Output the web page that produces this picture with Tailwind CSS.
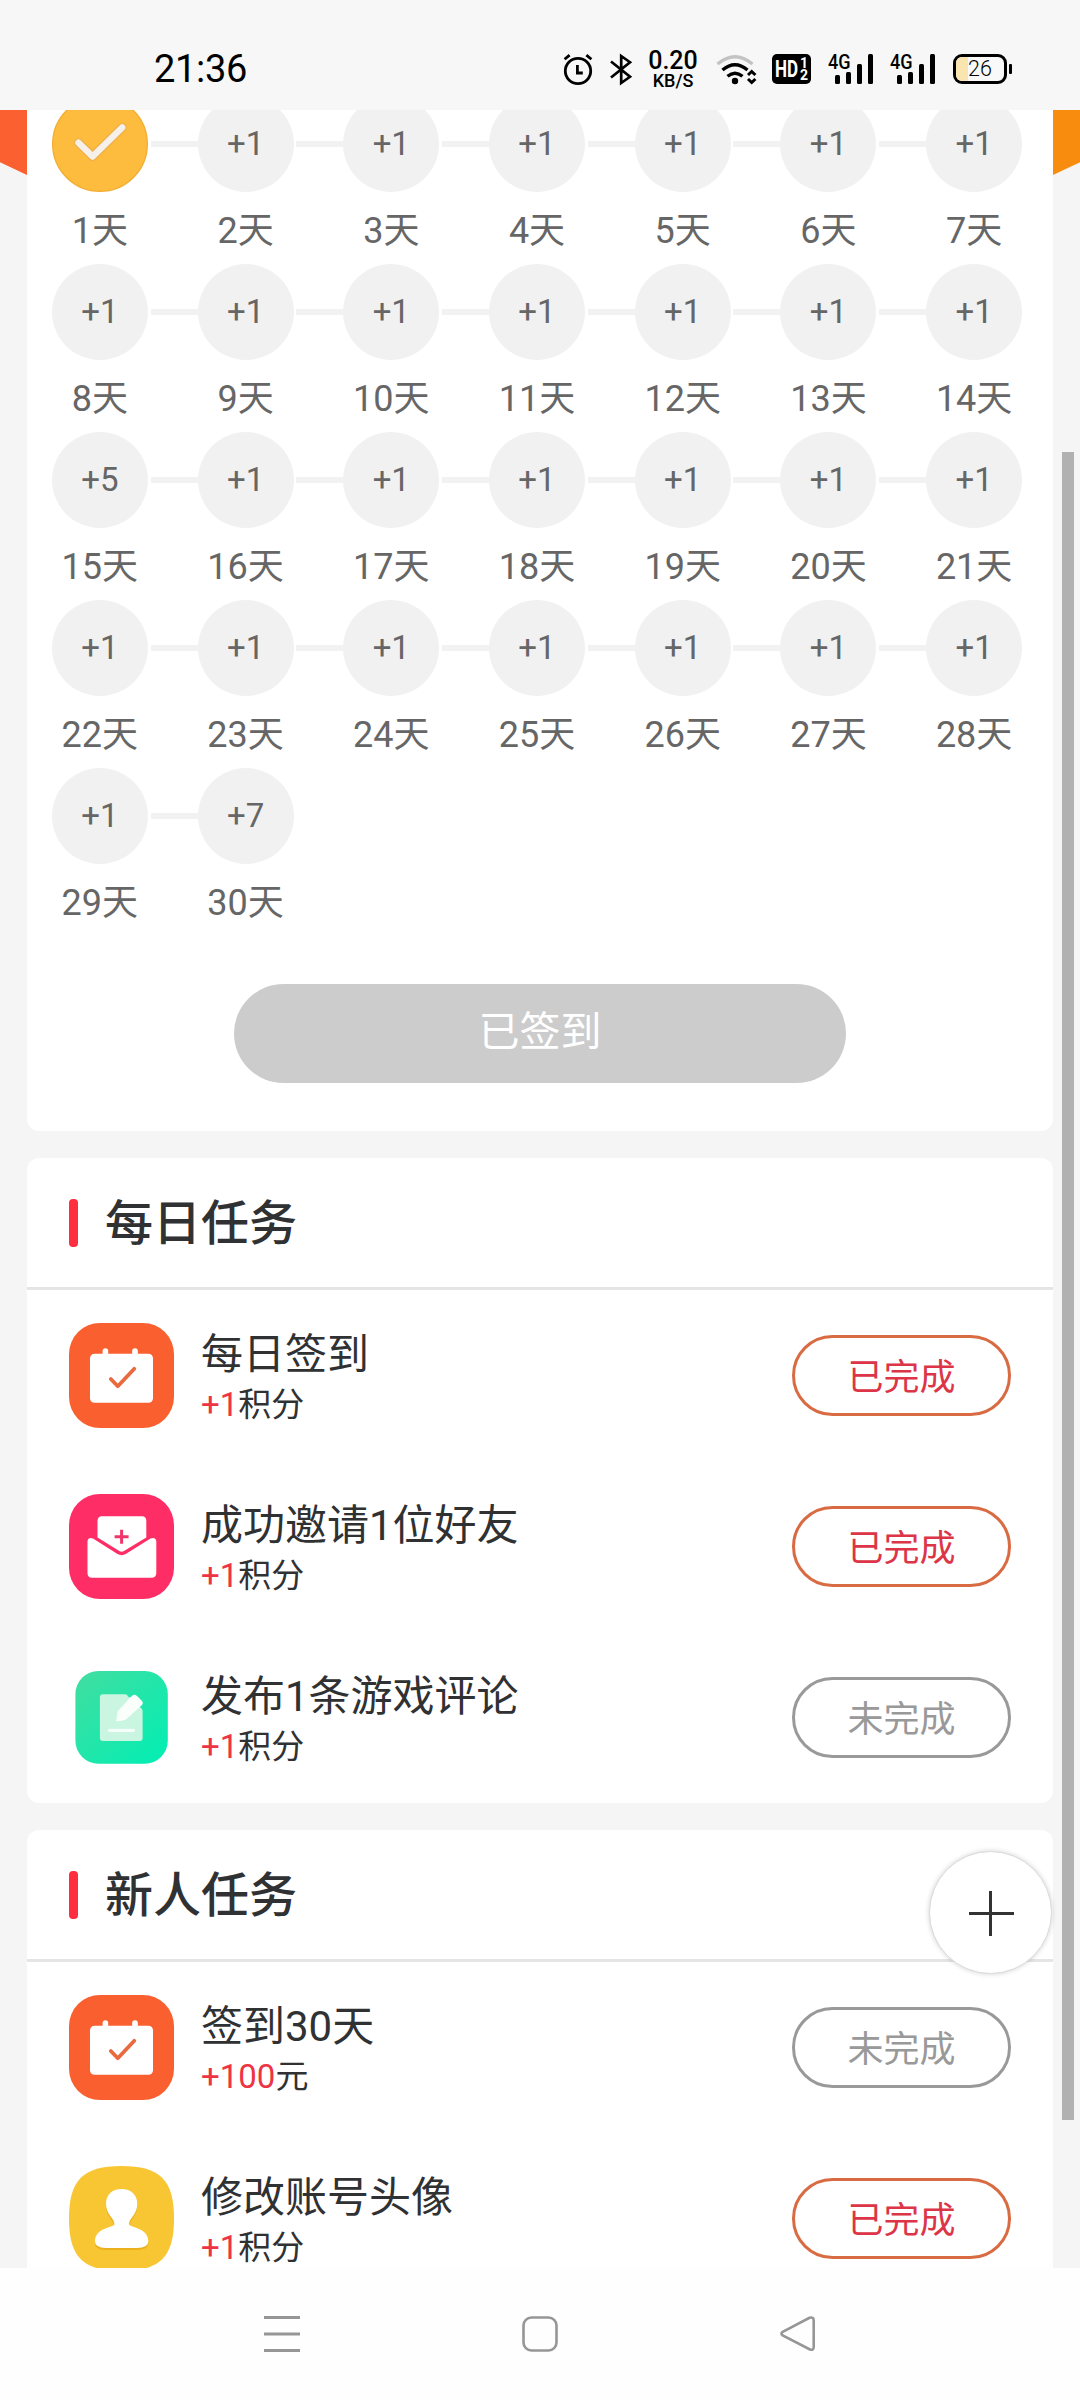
<!DOCTYPE html>
<html lang="zh-CN">
<head>
<meta charset="utf-8">
<title>签到</title>
<script src="https://cdn.jsdelivr.net/npm/@tailwindcss/browser@4"></script>
</head>
<body class="bg-[#f5f5f5]">
<div class="relative flex h-[2400px] w-[1080px] flex-col overflow-hidden bg-[#f5f5f5] font-[Roboto,'Noto_Sans_CJK_SC',sans-serif] text-[#303133]">

  <!-- status bar -->
  <header class="flex h-[110px] shrink-0 items-start bg-[#f7f7f7] pt-[50px] pl-[154px] text-black">
    <div class="w-[408px] text-[38px] leading-[39px] tracking-[-0.3px]">21:36</div>
    <svg class="mr-[14px] h-10 w-8" viewBox="0 0 32 40" fill="none" stroke="#000" stroke-width="2.8"><circle cx="16" cy="21" r="12.7"/><path d="M15.4 15v8h5.4M2.6 9.3l5-4.2M29.4 9.3l-5-4.2"/></svg>
    <svg class="mr-3 h-10 w-[26px]" viewBox="0 0 26 40" fill="none" stroke="#000" stroke-width="2.7"><path d="M3 11.5l19 15.3-8.8 6.2V6l8.8 6.2L3 27.5"/></svg>
    <div class="mr-[14px] flex w-[54px] flex-col items-center font-medium">
      <span class="text-[25px] leading-[21px]">0.20</span>
      <span class="mt-px text-[18px] leading-[18px]">KB/S</span>
    </div>
    <svg class="mr-3 h-10 w-[46px]" viewBox="0 0 46 40" fill="none" stroke-width="3.4"><path d="M3.5 14Q21 -.5 38.500 14" stroke="#c3c3c3"/><path d="M8.500 20Q21 9.500 33.500 20M13.500 26.300Q21 20 28.500 26.300" stroke="#000"/><circle cx="21" cy="31" r="3.200" fill="#000"/><path d="M34 25l3.700-3.500 3.700 3.500M34 29l3.700 3.500 3.700-3.500" stroke="#000" stroke-width="3"/></svg>
    <div class="mt-1 mr-[17px] flex h-[30px] w-[39px] rounded-[5px] bg-black pl-[3px] font-bold text-white">
      <span class="w-[24px] text-[24px] leading-[31px]"><span class="inline-block origin-left scale-x-[0.71]">HD</span></span>
      <span class="flex flex-col pt-[3px] pl-px text-[14px] leading-[12px]"><span>1</span><span>2</span></span>
    </div>
    <div class="mr-4 flex h-10 w-[46px]">
      <span class="relative w-0"><span class="absolute top-[2px] left-0 origin-left scale-x-[0.86] text-[21px] leading-[21px] font-medium">4G</span></span>
      <svg class="h-10 w-[46px]" viewBox="0 0 46 40"><rect x="7" y="25" width="5" height="9" rx="1.500"/><rect x="18" y="22" width="5" height="12" rx="1.500"/><rect x="29" y="14" width="5" height="20" rx="1.500"/><rect x="40" y="4" width="5" height="30" rx="1.500"/></svg>
    </div>
    <div class="mr-4 flex h-10 w-[46px]">
      <span class="relative w-0"><span class="absolute top-[2px] left-0 origin-left scale-x-[0.86] text-[21px] leading-[21px] font-medium">4G</span></span>
      <svg class="h-10 w-[46px]" viewBox="0 0 46 40"><rect x="7" y="25" width="5" height="9" rx="1.500"/><rect x="18" y="22" width="5" height="12" rx="1.500"/><rect x="29" y="14" width="5" height="20" rx="1.500"/><rect x="40" y="4" width="5" height="30" rx="1.500"/></svg>
    </div>
    <div class="mt-1 flex items-center pl-px">
      <div class="relative flex h-[30px] w-[54px] items-center justify-center overflow-hidden rounded-[9px] border-[3px] border-black bg-[#f9f9f9] text-[21.500px] font-light"><span class="absolute inset-y-0 left-0 w-[12px] bg-[#fae5b0]"></span><span class="relative">26</span></div>
      <div class="ml-[1.500px] h-[10px] w-[3px] rounded-[1px] bg-black"></div>
    </div>
  </header>

  <!-- scrolling page -->
  <main class="relative h-[2158px] shrink-0 overflow-hidden px-[27px]">
    <svg class="absolute top-0 left-0 h-[65px] w-[27px]" viewBox="0 0 27 65"><path d="M0 0H27V65L0 52.300Z" fill="#fa6030"/></svg>
    <svg class="absolute top-0 right-0 h-[65px] w-[27px]" viewBox="0 0 27 65"><path d="M27 0H0V65L27 52.300Z" fill="#f78c0f"/></svg>

    <section class="relative -mt-[14px] h-[1035px] rounded-[12px] bg-white">
      <div id="days" class="grid w-[1020px] grid-cols-7"></div>
      <div class="mt-12 ml-[207px] flex h-[99px] w-[612px] items-center justify-center rounded-full bg-[#ccc] text-[41px] text-white"><span class="-mt-px">已签到</span></div>
    </section>

    <section class="mt-[27px] rounded-[12px] bg-white">
      <h2 class="flex h-[132px] items-center border-b-[3px] border-[#e5e5e5] pl-[42px] text-[48px] font-medium"><span class="mr-[27px] h-12 w-[9px] rounded-[4px] bg-[#fe2e40]"></span><span class="pt-[3px]">每日任务</span></h2>
      <div id="daily"></div>
    </section>

    <section class="mt-[27px] rounded-[12px] bg-white">
      <h2 class="flex h-[132px] items-center border-b-[3px] border-[#e5e5e5] pl-[42px] text-[48px] font-medium"><span class="mr-[27px] h-12 w-[9px] rounded-[4px] bg-[#fe2e40]"></span><span class="pt-[3px]">新人任务</span></h2>
      <div id="newbie"></div>
    </section>
  </main>

  <!-- floating add button and scroll thumb -->
  <button class="absolute top-[1851px] left-[929px] flex h-[123px] w-[123px] items-center justify-center rounded-full border border-[#dadada] bg-white shadow-[0_0_5px_rgba(0,0,0,0.18)]">
    <svg class="h-[46px] w-[46px]" viewBox="0 0 46 46" stroke="#333" stroke-width="3"><path d="M1 23.500H46M22.500 1V46"/></svg>
  </button>
  <div class="absolute top-[452px] left-[1062px] h-[1668px] w-3 bg-[#b1b1b1]"></div>

  <!-- system navigation -->
  <nav class="flex h-[132px] shrink-0 items-start bg-[#fefefe] pt-12 pl-[264px]">
    <svg class="mr-[222px] h-9 w-9" viewBox="0 0 36 36" stroke="#969696" stroke-width="3"><path d="M0 1.500H36M0 18H36M0 34.500H36"/></svg>
    <svg class="mr-[222px] h-9 w-9" viewBox="0 0 36 36" fill="none" stroke="#969696" stroke-width="2.600"><rect x="1.500" y="1.500" width="33" height="33" rx="8"/></svg>
    <svg class="h-9 w-9" viewBox="0 0 36 36" fill="none" stroke="#969696" stroke-width="2.600"><path d="M2.700 15.800L29.500 1.800Q33.700 .5 33.700 4.500V31Q33.700 35 29.500 33.200L2.700 19.500Q.3 17.600 2.700 15.800Z"/></svg>
  </nav>
</div>

<script>
const checkBadge = `<svg class="h-24 w-24" viewBox="0 0 96 96"><circle cx="48" cy="48" r="47.300" fill="#fdbc3d" stroke="#f3ae32" stroke-width="1.400"/><path d="M26.500 46.700L40.600 60.500L70.200 31.500" fill="none" stroke="#eeb04a" stroke-width="9" stroke-linecap="round" stroke-linejoin="round"/><path d="M26.500 46.700L40.600 60.500L70.200 31.500" fill="none" stroke="#f5f1ea" stroke-width="6.500" stroke-linecap="round" stroke-linejoin="round"/></svg>`;
const points = d => d === 15 ? 5 : d === 30 ? 7 : 1;
document.getElementById('days').innerHTML = Array.from({length: 30}, (_, i) => {
  const d = i + 1;
  const line = d % 7 && d < 30 ? '<span class="absolute top-[45px] left-[123.500px] h-[6px] w-12 bg-[#f2f2f2]"></span>' : '';
  const dot = d === 1 ? checkBadge : `<div class="flex h-24 w-24 items-center justify-center rounded-full bg-[#f1f1f1] text-[33px]">+${points(d)}</div>`;
  return `<div class="relative flex h-[168px] flex-col items-center text-[#666]">${line}${dot}<div class="mt-[15px] text-[36px] leading-[48px]">${d}天</div></div>`;
}).join('');

const icons = {
  calendar: `<rect width="105" height="105" rx="31" fill="#fa5f30"/><rect x="21" y="30.700" width="63" height="49" rx="4.500" fill="#fff"/><path d="M36.400 28V34M66 28V34" stroke="#fff" stroke-width="5.600" stroke-linecap="round"/><path d="M41.800 56L48.800 63.200L65.300 45.800" fill="none" stroke="#ea6a40" stroke-width="3.800" stroke-linecap="round" stroke-linejoin="round"/>`,
  envelope: `<rect width="105" height="105" rx="31" fill="#ff2d65"/><path d="M33 22.300H73Q77.300 22.300 77.300 27V43.500L55 57Q52.600 58.300 50.300 57L28.500 43.500V27Q28.500 22.300 33 22.300Z" fill="#fff"/><path d="M18.500 47Q19.500 42.500 24 44.500L48.500 60Q52.600 62.300 56.700 60L81.500 44.500Q86.300 42.500 87.300 47V79Q87.300 83.700 82.500 83.700H23Q18.500 83.700 18.500 79Z" fill="#fff"/><path d="M45.600 42.700H59.600M52.600 35.700V49.700" stroke="#f0356a" stroke-width="3"/>`,
  note: `<defs><linearGradient id="mint" x1="0" y1="0" x2="1" y2="1"><stop offset="0" stop-color="#43dda0"/><stop offset="1" stop-color="#00efb4"/></linearGradient></defs><rect x="6.400" y="6" width="92.400" height="92.800" rx="23" fill="url(#mint)"/><path d="M34 29.300H56.500Q58.500 29.500 59 31.500L62 33L73 44Q73.600 45 73.600 46V73Q73.600 76 70.600 76H34Q30.900 76 30.900 73V32.500Q30.900 29.300 34 29.300Z" fill="#c9f5e1"/><path d="M47.300 56.300L48.500 46.500L62.500 31.300Q65 28.300 68 31L72.600 35.500Q75 38 72.500 40.500L57 54.500Q52.500 56.500 47.300 56.300Z" fill="#fafffc"/><path d="M40.500 65.300H64.500" stroke="#f4fffa" stroke-width="3.200" stroke-linecap="round"/>`,
  person: `<path d="M52.500 0C91 0 105 14 105 52.500S91 105 52.500 105S0 91 0 52.500S14 0 52.500 0Z" fill="#f7c632"/><path d="M52.500 25C62 25 68.300 31 68.300 39C68.300 50 62 53 60 59.500C61 62 79.300 63 79.300 77.500Q79.300 84 68 84H37Q26 84 26 77.500C26 63 44.500 62 45.500 59.500C43 53 37 50 37 39C37 31 43 25 52.500 25Z" fill="#eab11c"/><path d="M52.500 23C62 23 68.300 29 68.300 37.500C68.300 49 60 52 60 58.500C61 61.500 79.300 61.500 79.300 75.500Q79.300 82 68 82H37Q26 82 26 75.500C26 61.500 44.500 61.500 45.500 58.500C45.500 52 37 49 37 37.500C37 29 43 23 52.500 23Z" fill="#fff"/>`
};
const task = (icon, title, gain, unit, done) => `
  <div class="flex h-[171px] items-center px-[42px]">
    <svg class="h-[105px] w-[105px]" viewBox="0 0 105 105">${icons[icon]}</svg>
    <div class="ml-[27px] flex-1 pt-[3px]">
      <div class="text-[42px] leading-[56px]">${title}</div>
      <div class="text-[33px] leading-[44px]"><span class="text-[#ee3344]">${gain}</span>${unit}</div>
    </div>
    <div class="${done ? 'border-[#d96b43] text-[#dc3548]' : 'border-[#999] text-[#999]'} flex h-[81px] w-[219px] items-center justify-center rounded-full border-[3px] pt-[5px] text-[36px]">${done ? '已完成' : '未完成'}</div>
  </div>`;
document.getElementById('daily').innerHTML =
  task('calendar', '每日签到', '+1', '积分', true) +
  task('envelope', '成功邀请1位好友', '+1', '积分', true) +
  task('note', '发布1条游戏评论', '+1', '积分', false);
document.getElementById('newbie').innerHTML =
  task('calendar', '签到30天', '+100', '元', false) +
  task('person', '修改账号头像', '+1', '积分', true);
</script>
</body>
</html>
